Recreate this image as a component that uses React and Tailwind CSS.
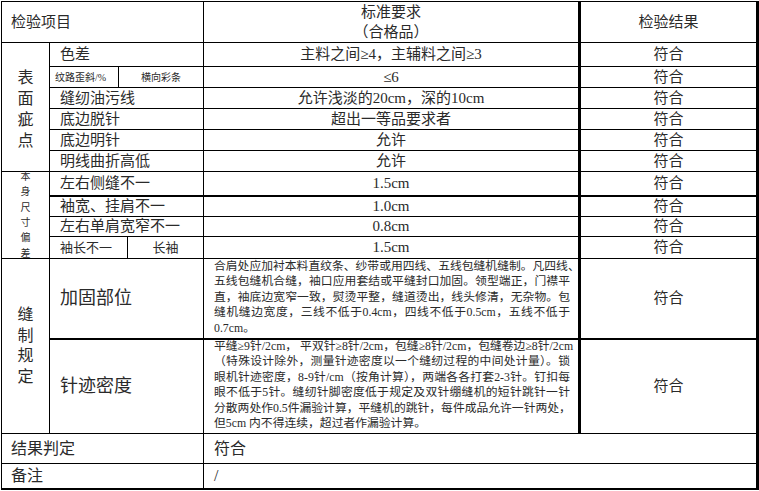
import React from 'react'

const cell = 'border-r border-b border-black flex items-center'

function Row (props) {
  // one ordinary row: label in col 2-4, requirement in col 5, result in col 6
  const thick = props.thick ? ' border-b-2' : ''
  return (
    <>
      <div className={cell + thick + ' col-start-2 col-span-3 pl-[10px] text-[15px]'}>{props.label}</div>
      <div className={cell + thick + ' col-start-5 justify-center text-[15px] border-r-[3px]'}>{props.req}</div>
      <div className={cell + thick + ' col-start-6 justify-center text-[15px] border-r-[3px]'}>符合</div>
    </>
  )
}

function Lines (props) {
  return (
    <div className="w-full">
      {props.lines.map((l, i) => (
        <div
          key={i}
          className={'whitespace-nowrap h-[15.4px] leading-[15.4px] ' + (i < props.lines.length - 1 ? 'text-justify [text-align-last:justify]' : '')}
        >{l}</div>
      ))}
    </div>
  )
}

const para1 = [
  '合肩处应加衬本料直纹条、纱带或用四线、五线包缝机缝制。凡四线、',
  '五线包缝机合缝，袖口应用套结或平缝封口加固。领型端正，门襟平',
  '直，袖底边宽窄一致，熨烫平整，缝道烫出，线头修清，无杂物。包',
  '缝机缝边宽度，三线不低于0.4cm，四线不低于0.5cm，五线不低于',
  '0.7cm。'
]

const para2 = [
  '平缝≥9针/2cm， 平双针≥8针/2cm，包缝≥8针/2cm，包缝卷边≥8针/2cm',
  '（特殊设计除外，测量针迹密度以一个缝纫过程的中间处计量）。锁',
  '眼机针迹密度，8-9针/cm（按角计算），两端各各打套2-3针。钉扣每',
  '眼不低于5针。缝纫针脚密度低于规定及双针绷缝机的短针跳针一针',
  '分散两处作0.5件漏验计算，平缝机的跳针，每件成品允许一针两处，',
  '但5cm 内不得连续，超过者作漏验计算。'
]

export default function App () {
  return (
    <div className="w-[759px] h-[491px] bg-white overflow-hidden pt-px pl-px text-[#2a2a2a] font-['Liberation_Serif','Noto_Sans_CJK_SC',serif]">
      <div className="grid grid-cols-[48px_69px_9px_76px_377px_178px] grid-rows-[41px_24px_21px_21px_21px_21px_21px_25px_20px_20px_22px_81px_94px_30px_26px] border-l border-t border-black w-max">
        {/* header */}
        <div className={cell + ' col-start-1 col-span-4 row-start-1 pl-[9px] text-[15px]'}>检验项目</div>
        <div className={cell + ' col-start-5 row-start-1 flex-col justify-center text-[15px] leading-[20px] border-r-[3px]'}>
          <span>标准要求</span>
          <span>（合格品）</span>
        </div>
        <div className={cell + ' col-start-6 row-start-1 justify-center text-[15px] border-r-[3px]'}>检验结果</div>

        {/* 表面疵点 */}
        <div className={cell + ' col-start-1 row-start-2 row-span-6 flex-col justify-center text-[16px] leading-[21px] pt-[4px]'}>
          <span>表</span><span>面</span><span>疵</span><span>点</span>
        </div>
        <Row label="色差" req="主料之间≥4，主辅料之间≥3" />
        <div className={cell + ' col-start-2 pl-[5px] text-[10px]'}>纹路歪斜/%</div>
        <div className={cell + ' col-start-3 col-span-2 justify-center text-[10px]'}>横向彩条</div>
        <div className={cell + ' col-start-5 justify-center text-[15px] border-r-[3px]'}>≤6</div>
        <div className={cell + ' col-start-6 justify-center text-[15px] border-r-[3px]'}>符合</div>
        <Row label="缝纫油污线" req="允许浅淡的20cm，深的10cm" />
        <Row label="底边脱针" req="超出一等品要求者" />
        <Row label="底边明针" req="允许" />
        <Row label="明线曲折高低" req="允许" />

        {/* 本身尺寸偏差 */}
        <div className={cell + ' col-start-1 row-start-8 row-span-4 flex-col justify-center text-[10px] leading-[15.3px]'}>
          <span>本</span><span>身</span><span>尺</span><span>寸</span><span>偏</span><span>差</span>
        </div>
        <Row label="左右侧缝不一" req="1.5cm" thick />
        <Row label="袖宽、挂肩不一" req="1.0cm" />
        <Row label="左右单肩宽窄不一" req="0.8cm" />
        <div className={cell + ' col-start-2 col-span-2 pl-[10px] text-[13px]'}>袖长不一</div>
        <div className={cell + ' col-start-4 justify-center text-[13px]'}>长袖</div>
        <div className={cell + ' col-start-5 justify-center text-[15px] border-r-[3px]'}>1.5cm</div>
        <div className={cell + ' col-start-6 justify-center text-[15px] border-r-[3px]'}>符合</div>

        {/* 缝制规定 */}
        <div className={cell + ' col-start-1 row-start-12 row-span-2 flex-col justify-center text-[16px] leading-[20.5px]'}>
          <span>缝</span><span>制</span><span>规</span><span>定</span>
        </div>
        <div className={cell + ' border-b-2 col-start-2 col-span-3 pl-[10px] text-[18px]'}>加固部位</div>
        <div className={cell + ' border-b-2 col-start-5 items-start overflow-hidden pl-[10px] pr-[8px] text-[11.8px] border-r-[3px]'}>
          <Lines lines={para1} />
        </div>
        <div className={cell + ' border-b-2 col-start-6 justify-center text-[15px] border-r-[3px]'}>符合</div>

        <div className={cell + ' col-start-2 col-span-3 pl-[10px] text-[18px]'}>针迹密度</div>
        <div className={cell + ' col-start-5 items-start overflow-hidden pl-[10px] pr-[8px] text-[11.8px] border-r-[3px]'}>
          <div className="-mt-px w-full">
            <Lines lines={para2} />
          </div>
        </div>
        <div className={cell + ' col-start-6 justify-center text-[15px] border-r-[3px]'}>符合</div>

        {/* bottom rows */}
        <div className={cell + ' col-start-1 col-span-4 pl-[9px] text-[16px]'}>结果判定</div>
        <div className={cell + ' col-start-5 col-span-2 pl-[10px] text-[16px] border-r-[3px]'}>符合</div>
        <div className={cell + ' border-b-2 col-start-1 col-span-4 pl-[9px] text-[16px]'}>备注</div>
        <div className={cell + ' border-b-2 col-start-5 col-span-2 pl-[10px] text-[16px] border-r-[3px]'}>/</div>
      </div>
    </div>
  )
}
